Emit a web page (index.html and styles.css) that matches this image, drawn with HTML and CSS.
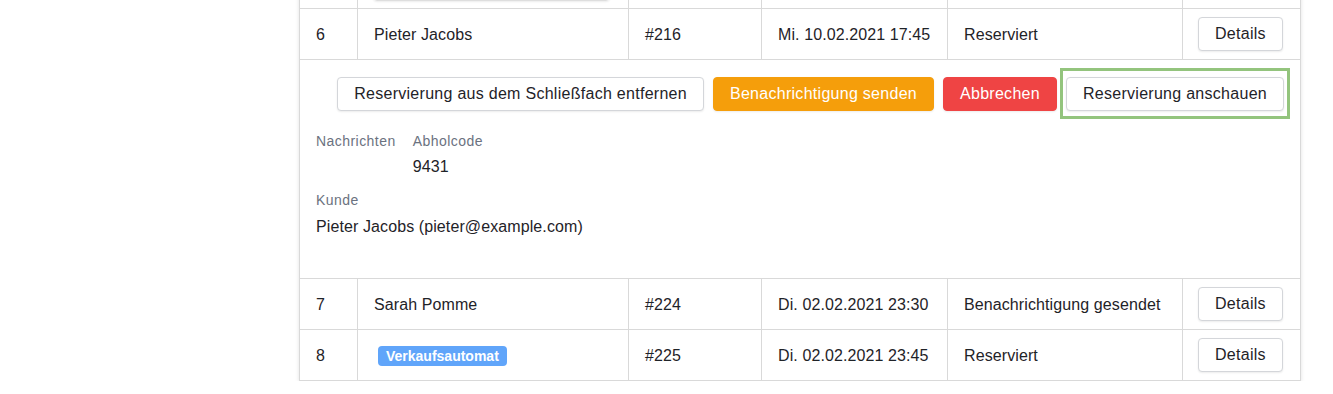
FILE: index.html
```html
<!DOCTYPE html>
<html lang="de">

<head>
  <meta charset="UTF-8" />
  <meta name="viewport" content="width=device-width, initial-scale=1.0" />
  <title>Reservierungen</title>
  <link rel="stylesheet" href="styles.css">
</head>

<body>
  <div class="page">
    <div class="orders">
      <!-- previous row, scrolled mostly out of view -->
      <div class="row">
        <div class="cell"></div>
        <div class="cell"><div class="field"></div></div>
        <div class="cell"></div>
        <div class="cell"></div>
        <div class="cell"></div>
        <div class="cell"></div>
      </div>

      <div class="row">
        <div class="cell">6</div>
        <div class="cell">Pieter Jacobs</div>
        <div class="cell">#216</div>
        <div class="cell">Mi. 10.02.2021 17:45</div>
        <div class="cell">Reserviert</div>
        <div class="cell"><button class="btn">Details</button></div>
      </div>

      <div class="expand">
        <div class="actions">
          <button class="btn">Reservierung aus dem Schließfach entfernen</button>
          <button class="btn btn-warn">Benachrichtigung senden</button>
          <button class="btn btn-danger">Abbrechen</button>
          <span class="highlight"><button class="btn">Reservierung anschauen</button></span>
        </div>
        <div class="info">
          <div class="info-item">
            <div class="label">Nachrichten</div>
          </div>
          <div class="info-item">
            <div class="label">Abholcode</div>
            <div class="value">9431</div>
          </div>
        </div>
        <div class="info-item customer">
          <div class="label">Kunde</div>
          <div class="value">Pieter Jacobs (pieter@example.com)</div>
        </div>
      </div>

      <div class="row">
        <div class="cell">7</div>
        <div class="cell">Sarah Pomme</div>
        <div class="cell">#224</div>
        <div class="cell">Di. 02.02.2021 23:30</div>
        <div class="cell">Benachrichtigung gesendet</div>
        <div class="cell"><button class="btn">Details</button></div>
      </div>

      <div class="row last">
        <div class="cell">8</div>
        <div class="cell"><span class="badge">Verkaufsautomat</span></div>
        <div class="cell">#225</div>
        <div class="cell">Di. 02.02.2021 23:45</div>
        <div class="cell">Reserviert</div>
        <div class="cell"><button class="btn">Details</button></div>
      </div>
    </div>
  </div>
</body>

</html>
```

FILE: styles.css
```css
body {
  margin: 0;
  background: #fff;
  font-family: "Liberation Sans", Arial, sans-serif;
  color: #1f2328;
  font-size: 16px;
  line-height: 24px;
  letter-spacing: 0.1px;
}

.page {
  padding-left: 299px;
}

.orders {
  width: 1002px;
  box-sizing: border-box;
  margin-top: -42px;
  border: 1px solid #d9d9d9;
  border-top: none;
  box-shadow: 0 1px 4px rgba(0, 0, 0, 0.12);
}

.row {
  display: grid;
  grid-template-columns: 57px 271px 133px 186px 235px 118px;
  border-bottom: 1px solid #d9d9d9;
}

.row.last {
  border-bottom: none;
}

.cell {
  height: 50px;
  box-sizing: border-box;
  display: flex;
  align-items: center;
  padding: 1px 16px 0;
  border-left: 1px solid #d9d9d9;
  white-space: nowrap;
}

.cell:first-child {
  border-left: none;
}

.field {
  width: 237px;
  height: 34px;
  margin-left: -1px;
  box-sizing: border-box;
  border: 1px solid #dedede;
  border-radius: 4px;
  box-shadow: 0 1px 2px rgba(0, 0, 0, 0.08);
}

.btn {
  font-family: inherit;
  font-size: 16px;
  line-height: 24px;
  letter-spacing: 0.28px;
  color: #1f2328;
  background: #fff;
  border: 1px solid #d4d6da;
  border-radius: 4px;
  padding: 4px 16px;
  box-shadow: 0 1px 2px rgba(0, 0, 0, 0.08);
  white-space: nowrap;
  cursor: pointer;
}

.cell .btn {
  margin-top: -1px;
  margin-left: -1px;
}

.btn-warn {
  background: #f59e0b;
  border-color: #f59e0b;
  color: #fff;
}

.btn-danger {
  background: #ef4444;
  border-color: #ef4444;
  color: #fff;
}

.expand {
  padding: 17px 16px 39px;
  border-bottom: 1px solid #d9d9d9;
}

.actions {
  display: flex;
  justify-content: flex-end;
  gap: 9px;
}

/* annotation frame round the last action */
.highlight {
  position: relative;
  display: inline-flex;
}

.highlight::after {
  content: "";
  position: absolute;
  top: -9px;
  bottom: -8px;
  left: -6px;
  right: -6px;
  border: 3px solid #93c47d;
}

.info {
  display: flex;
  gap: 17px;
  margin-top: 20px;
}

.label {
  font-size: 14px;
  line-height: 20px;
  letter-spacing: 0.45px;
  color: #6b7280;
}

.value {
  margin-top: 4px;
}

.customer {
  margin-top: 11px;
}

.customer .value {
  margin-top: 5px;
}

.badge {
  margin-left: 4px;
  display: inline-block;
  background: #60a5fa;
  color: #fff;
  font-size: 14px;
  font-weight: bold;
  letter-spacing: 0;
  line-height: 20px;
  padding: 0 8px;
  border-radius: 4px;
}
```
